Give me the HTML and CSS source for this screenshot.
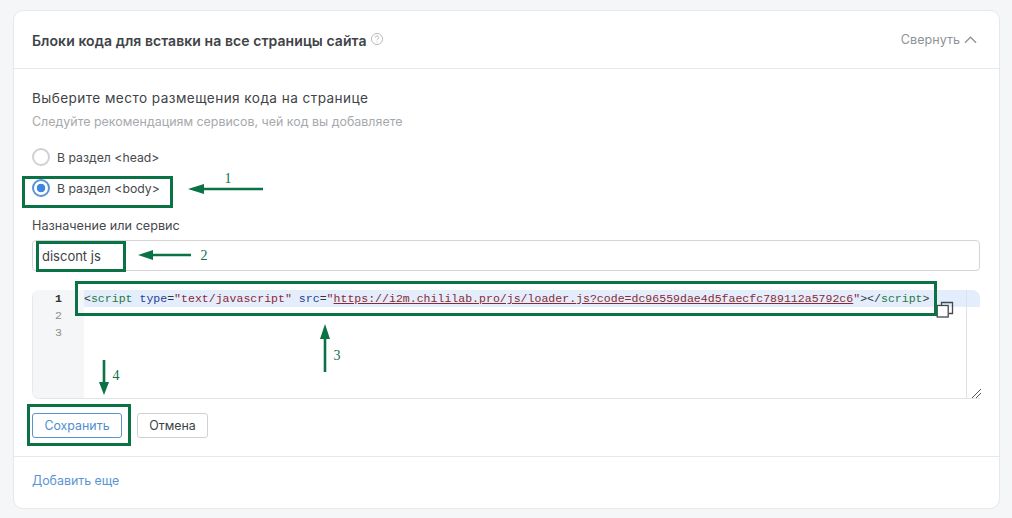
FILE: index.html
```html
<!DOCTYPE html>
<html lang="ru">
<head>
<meta charset="utf-8">
<title>Блоки кода</title>
<link rel="stylesheet" href="styles.css">
</head>
<body>
<main class="card">
  <header class="card-head">
    <div class="head-title">
      <h1>Блоки кода для вставки на все страницы сайта</h1>
      <svg class="help" viewBox="0 0 14 14" width="14" height="14"><circle cx="7" cy="7" r="5.6" fill="none" stroke="#b9bcc0"/><path d="M5.3 5.6a1.7 1.7 0 1 1 2.6 1.4c-.6.4-.9.6-.9 1.3" fill="none" stroke="#b9bcc0"/><circle cx="7" cy="10" r=".6" fill="#b9bcc0"/></svg>
    </div>
    <button class="collapse">Свернуть
      <svg viewBox="0 0 14 8" width="13" height="8"><path d="M1 7l6-6 6 6" fill="none" stroke="#8f9296" stroke-width="1.4"/></svg>
    </button>
  </header>
  <section class="card-body">
    <h2>Выберите место размещения кода на странице</h2>
    <p class="hint">Следуйте рекомендациям сервисов, чей код вы добавляете</p>
    <div class="radios">
      <label class="radio"><span class="dot"></span>В раздел &lt;head&gt;</label>
      <label class="radio"><span class="dot on"></span>В раздел &lt;body&gt;</label>
    </div>
    <div class="field-label">Назначение или сервис</div>
    <div class="input">discont js</div>
    <div class="editor">
      <div class="gutter"><div class="num active">1</div><div class="num">2</div><div class="num">3</div></div>
      <div class="code">
        <div class="line active-line"><span class="p">&lt;</span><span class="t">script</span> <span class="a">type</span><span class="p">=</span><span class="s">"text/javascript"</span> <span class="a">src</span><span class="p">=</span><span class="s">"<span class="u">https://i2m.chililab.pro/js/loader.js?code=dc96559dae4d5faecfc789112a5792c6</span>"</span><span class="p">&gt;&lt;/</span><span class="t">script</span><span class="p">&gt;</span></div>
      </div>
      <div class="track"></div>
      <svg class="copy" viewBox="0 0 18 17" width="18" height="17"><path d="M5.5 4V1.5h11v11H13" fill="none" stroke="#44474b" stroke-width="1.3"/><rect x="1.2" y="4.5" width="11" height="11.5" fill="#fff" stroke="#44474b" stroke-width="1.3"/></svg>
      <svg class="grip" viewBox="0 0 11 11" width="11" height="11"><path d="M1 10L10 1M5 10l5-5" fill="none" stroke="#555" stroke-width="1"/></svg>
    </div>
    <div class="actions">
      <button class="btn primary">Сохранить</button>
      <button class="btn cancel">Отмена</button>
    </div>
  </section>
  <footer class="card-foot"><a class="add">Добавить еще</a></footer>
</main>
<svg class="notes" viewBox="0 0 1012 518" width="1012" height="518">
  <g class="boxes">
    <rect x="23.5" y="177.5" width="148" height="29"/>
    <rect x="37.5" y="242.5" width="87" height="28"/>
    <rect x="76.5" y="282.5" width="859" height="32"/>
    <rect x="28.5" y="405.5" width="101" height="39"/>
  </g>
  <g class="arrows">
    <path d="M263 189H200"/><path class="head" d="M188 189L204 184V194Z"/>
    <path d="M191 255H150"/><path class="head" d="M138 255L153 250V260Z"/>
    <path d="M325 372V336"/><path class="head" d="M325 324L330 339H320Z"/>
    <path d="M104 360V384"/><path class="head" d="M104 395L99 382H109Z"/>
  </g>
  <text class="num-note" x="228" y="183">1</text>
  <text class="num-note" x="204" y="260">2</text>
  <text class="num-note" x="337" y="360">3</text>
  <text class="num-note" x="116" y="380">4</text>
</svg>
</body>
</html>
```
FILE: styles.css
```css
* { box-sizing: border-box; }
html, body { margin: 0; height: 100%; }
body {
  background: #f5f6f8;
  padding: 10px 12px 9px 13px;
  font-family: Inter, "Noto Sans", sans-serif;
  color: #3c3f43;
  position: relative;
  overflow: hidden;
}
.card {
  height: 499px;
  background: #fff;
  border: 1px solid #e6e8eb;
  border-radius: 10px;
  display: flex;
  flex-direction: column;
}
.card-head {
  height: 58px;
  flex: none;
  padding: 0 22px 0 18px;
  border-bottom: 1px solid #e6e8eb;
  display: flex;
  align-items: center;
  justify-content: space-between;
}
.head-title { display: flex; align-items: center; gap: 3px; }
.head-title h1 { margin: 0; font-size: 14px; letter-spacing: .07px; font-weight: 600; color: #404347; position: relative; top: 1px; }
.help { position: relative; top: -1px; }
.collapse {
  border: 0; background: none; padding: 0;
  font: 400 12.6px Inter, "Noto Sans", sans-serif;
  color: #8f9296;
  display: flex; align-items: center; gap: 4px;
}
.card-body { flex: 1; padding: 21px 19px 0 18px; }
h2 { margin: 0; font-size: 13.6px; line-height: 16px; font-weight: 400; letter-spacing: .43px; color: #404347; }
.hint { margin: 8px 0 0; font-size: 12.45px; line-height: 16px; color: #a6a9ad; }
.radios { margin-top: 18px; display: flex; flex-direction: column; gap: 13px; }
.radio { display: flex; align-items: center; gap: 7px; height: 18px; font-size: 12.25px; color: #46494d; }
.dot { width: 18px; height: 18px; border-radius: 50%; border: 2px solid #cfd1d4; background: #fff; }
.dot.on {
  border-color: #5b93d6;
  background: radial-gradient(circle, #3f86e0 0 4px, #fff 4.6px);
}
.field-label { margin-top: 21px; font-size: 12.65px; line-height: 16px; color: #46494d; }
.input {
  margin-top: 6px;
  height: 31px;
  border: 1px solid #d2d4d7;
  border-radius: 4px;
  padding: 0 9px;
  display: flex; align-items: center;
  font-size: 13px;
  color: #3c3f43;
}
.editor {
  margin-top: 19px;
  height: 109px;
  position: relative;
  display: flex;
  border-bottom: 1px solid #e2e4e7;
  border-left: 1px solid #e6e8eb;
  border-radius: 8px 8px 0 8px;
}
.gutter { width: 51px; flex: none; background: #f5f6f8; border-radius: 8px 0 0 8px; }
.num {
  height: 17px;
  text-align: center;
  font: 11.55px/17px "Liberation Mono", monospace;
  color: #8b8e92;
}
.num.active { color: #2f3236; font-weight: 700; }
.code { flex: 1; min-width: 0; }
.line {
  height: 17px;
  white-space: pre;
  font: 11.55px/17px "Liberation Mono", monospace;
  color: #3a3d42;
}
.active-line { background: #e4edfb; border-radius: 0 8px 0 0; }
.p { color: #33363a; }
.t { color: #1f7a45; }
.a { color: #1d3f94; }
.s { color: #8a2a35; }
.u { text-decoration: underline; text-decoration-color: #8a2a35; }
.track {
  position: absolute;
  top: 0; right: 0; bottom: 0;
  width: 14px;
  border-left: 1px solid #dfe1e4;
}
.copy { position: absolute; top: 11px; right: 26px; }
.grip { position: absolute; right: -2px; bottom: -1px; }
.actions { margin-top: 14px; display: flex; gap: 15px; }
.btn {
  height: 25px;
  padding: 0;
  border: 1px solid #cfd1d4;
  border-radius: 3px;
  background: #fff;
  font: 400 12.4px Inter, "Noto Sans", sans-serif;
  color: #3c3f43;
}
.btn.cancel { width: 71px; }
.btn.primary { width: 90px; border-color: #5b93cf; color: #4f8dd0; }
.card-foot {
  height: 52px;
  flex: none;
  padding: 0 18px 4px;
  border-top: 1px solid #e6e8eb;
  display: flex; align-items: center;
}
.add { font-size: 12.4px; color: #5a94d6; }
.notes { position: absolute; left: 0; top: 0; pointer-events: none; }
.boxes rect { fill: none; stroke: #0a7245; stroke-width: 3; }
.arrows path { fill: none; stroke: #0a7245; stroke-width: 2.6; }
.arrows .head { fill: #0a7245; stroke: none; }
.num-note { font: 14px "Liberation Serif", serif; fill: #0a7245; text-anchor: middle; }
```
